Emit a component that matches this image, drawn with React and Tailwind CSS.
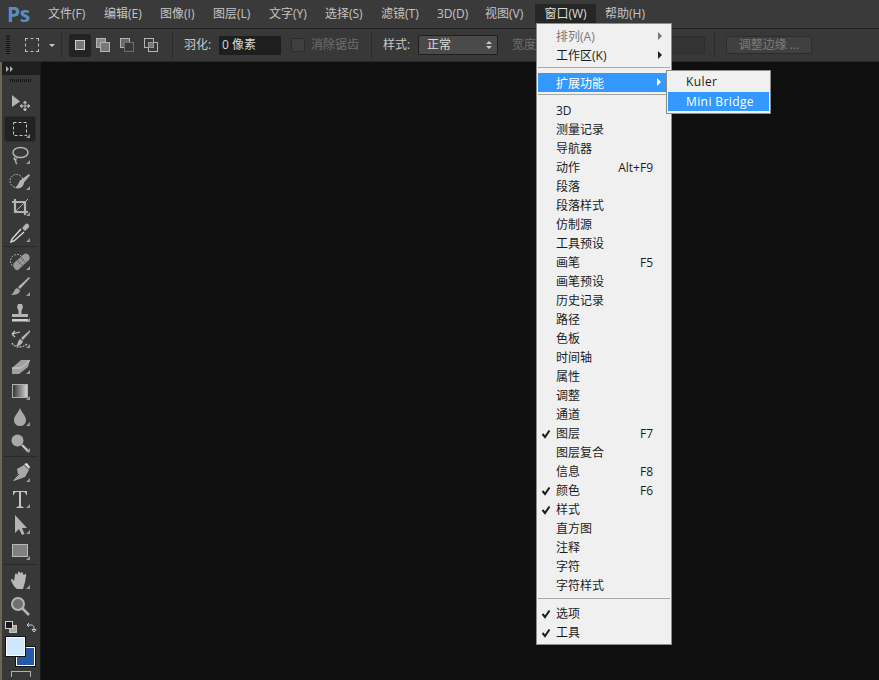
import React from 'react';

const cjk = { fontFamily: '"Open Sans", "Noto Sans CJK SC", sans-serif' };

const menus = [
  ['文件(F)', 'w-[39px]'],
  ['编辑(E)', 'w-[39px]'],
  ['图像(I)', 'w-[36px]'],
  ['图层(L)', 'w-[39px]'],
  ['文字(Y)', 'w-[39px]'],
  ['选择(S)', 'w-[39px]'],
  ['滤镜(T)', 'w-[39px]'],
  ['3D(D)', 'w-[31px]'],
  ['视图(V)', 'w-[39px]'],
];

const windowItems = [
  { label: '3D' },
  { label: '测量记录' },
  { label: '导航器' },
  { label: '动作', key: 'Alt+F9' },
  { label: '段落' },
  { label: '段落样式' },
  { label: '仿制源' },
  { label: '工具预设' },
  { label: '画笔', key: 'F5' },
  { label: '画笔预设' },
  { label: '历史记录' },
  { label: '路径' },
  { label: '色板' },
  { label: '时间轴' },
  { label: '属性' },
  { label: '调整' },
  { label: '通道' },
  { label: '图层', key: 'F7', checked: true },
  { label: '图层复合' },
  { label: '信息', key: 'F8' },
  { label: '颜色', key: 'F6', checked: true },
  { label: '样式', checked: true },
  { label: '直方图' },
  { label: '注释' },
  { label: '字符' },
  { label: '字符样式' },
];

const Check = () => (
  <svg width="10" height="10" viewBox="0 0 10 10" className="absolute left-[4px] top-[5px]">
    <path d="M1.5 5 L4 8 L8.5 1.5" fill="none" stroke="#1c1c1c" strokeWidth="2" />
  </svg>
);

const Arrow = ({ color = '#222' }) => (
  <svg width="4" height="8" viewBox="0 0 4 8" className="absolute right-[9px] top-[5px]">
    <path d="M0 0 L4 4 L0 8 Z" fill={color} />
  </svg>
);

const MenuRow = ({ label, shortcut, checked, arrow, disabled, active }) => (
  <div
    className={`relative flex h-[19px] items-center justify-between pr-[18px] text-[12px] leading-[19px] ${active ? 'bg-[#3399ff] pl-[18px] pt-[1px] text-white' : disabled ? 'pl-[19px] text-[#777777]' : 'pl-[19px] text-[#1c1c1c]'}`}
  >
    {checked && <Check />}
    <span>{label}</span>
    {shortcut && <span>{shortcut}</span>}
    {arrow && <Arrow color={active ? '#ffffff' : disabled ? '#777777' : '#222222'} />}
  </div>
);

const Sep = ({ cls }) => <div className={`mx-[1px] h-px bg-[#a8a8a8] ${cls}`} />;

const Divider = ({ cls }) => <div className={`h-[26px] w-px bg-[#2a2a2a] ${cls}`} />;

const ModeIcon = ({ children, cls }) => (
  <svg width="16" height="16" viewBox="0 0 16 16" className={cls}>
    {children}
  </svg>
);

const Corner = () => (
  <svg width="4" height="4" viewBox="0 0 4 4" className="absolute bottom-[3px] right-[5px]">
    <path d="M4 0 V4 H0 Z" fill="#9a9a9a" />
  </svg>
);

const Tool = ({ children, corner = true, selected, cls = '' }) => (
  <div
    className={`relative mx-[3px] flex h-[24px] w-[30px] shrink-0 items-center justify-center ${selected ? 'rounded-[2px] bg-[#222222] shadow-[0_0_0_1px_#2e2e2e]' : ''} ${cls}`}
  >
    <svg width="22" height="22" viewBox="0 0 22 22">
      {children}
    </svg>
    {corner && <Corner />}
  </div>
);

const ToolSep = () => <div className="mx-[2px] mt-[-1px] h-px shrink-0 bg-[#2a2a2a]" />;

const G = '#b4b4b4';

export default function App() {
  return (
    <div className="relative h-[680px] w-[879px] overflow-hidden bg-[#0f0f0f]" style={cjk}>
      {/* menu bar */}
      <div className="flex h-[29px] items-center border-b border-[#222222] bg-[#3a3a3a] pl-[7px] text-[12px] text-[#c4c4c4]">
        <span className="w-[41px] text-[21px] font-bold leading-none tracking-[-0.5px] text-[#5b8cbf]">Ps</span>
        <div className="flex items-center gap-[17px]">
          {menus.map(([label, w]) => (
            <span key={label} className={`${w} whitespace-nowrap`}>
              {label}
            </span>
          ))}
        </div>
        <span className="ml-[11px] flex h-[20px] w-[61px] items-center justify-center bg-[#262626] text-[#dddddd]">窗口(W)</span>
        <span className="ml-[9px] whitespace-nowrap">帮助(H)</span>
      </div>

      {/* options bar */}
      <div className="flex h-[33px] items-center border-b border-[#2a2a2a] bg-[#383838] text-[12px] text-[#c8c8c8]">
        <div className="ml-[6px] h-[20px] w-[4px] bg-[repeating-linear-gradient(to_bottom,#161616_0,#161616_1px,transparent_1px,transparent_2px)]" />
        <div className="ml-[15px] h-[14px] w-[14px] border border-dashed border-[#bdbdbd]" />
        <div className="ml-[10px] h-0 w-0 border-x-[3px] border-t-[3px] border-x-transparent border-t-[#c8c8c8]" />
        <Divider cls="ml-[6px]" />
        <div className="ml-[7px] flex h-[23px] w-[22px] items-center justify-center rounded-[2px] bg-[#232323]">
          <div className="h-[10px] w-[10px] border border-[#cccccc] bg-[#777777]" />
        </div>
        <ModeIcon cls="ml-[4px]">
          <rect x="1.5" y="1.5" width="9" height="9" fill="#8a8a8a" stroke="#b4b4b4" />
          <rect x="5.5" y="5.5" width="9" height="9" fill="#777777" stroke="#b4b4b4" />
        </ModeIcon>
        <ModeIcon cls="ml-[8px]">
          <rect x="1.5" y="1.5" width="9" height="9" fill="#6a6a6a" stroke="#b4b4b4" />
          <rect x="5.5" y="5.5" width="9" height="9" fill="#383838" stroke="#6e6e6e" />
        </ModeIcon>
        <ModeIcon cls="ml-[8px]">
          <rect x="1.5" y="1.5" width="9" height="9" fill="none" stroke="#b4b4b4" />
          <rect x="5.5" y="5.5" width="9" height="9" fill="none" stroke="#b4b4b4" />
          <rect x="5.5" y="5.5" width="5" height="5" fill="#777777" />
        </ModeIcon>
        <Divider cls="ml-[13px]" />
        <span className="ml-[11px] w-[27px] whitespace-nowrap">羽化:</span>
        <div className="ml-[8px] flex h-[19px] w-[62px] items-center bg-[#1e1e1e] pl-[3px] text-[#d8d8d8]">0 像素</div>
        <div className="ml-[10px] h-[14px] w-[14px] rounded-[2px] border border-[#2c2c2c] bg-[#3f3f3f]" />
        <span className="ml-[6px] w-[46px] whitespace-nowrap text-[#6f6f6f]">消除锯齿</span>
        <Divider cls="ml-[14px]" />
        <span className="ml-[11px] w-[28px] whitespace-nowrap">样式:</span>
        <div className="ml-[7px] flex h-[20px] w-[80px] items-center justify-between rounded-[2px] border border-[#1e1e1e] bg-[#4a4a4a] pl-[8px] pr-[5px] text-[#dddddd]">
          <span>正常</span>
          <span className="flex flex-col gap-[2px]">
            <span className="h-0 w-0 border-x-[3px] border-b-[3px] border-x-transparent border-b-[#c8c8c8]" />
            <span className="h-0 w-0 border-x-[3px] border-t-[3px] border-x-transparent border-t-[#c8c8c8]" />
          </span>
        </div>
        <span className="ml-[14px] w-[24px] whitespace-nowrap text-[#6f6f6f]">宽度</span>
        <div className="ml-[36px] h-[18px] w-[133px] rounded-[1px] bg-[#333333] shadow-[inset_0_0_0_1px_#2e2e2e]" />
        <Divider cls="ml-[9px]" />
        <div className="ml-[11px] flex h-[18px] w-[86px] items-center justify-center rounded-[2px] border border-[#2c2c2c] bg-[#404040] text-[#7c7c7c]">调整边缘 ...</div>
      </div>

      <div className="flex h-[618px]">
        {/* toolbar */}
        <div className="flex w-[41px] shrink-0 flex-col border-r border-[#1c1c1c] border-l-2 border-l-[#6e6555] bg-[#383838]">
          <div className="flex h-[13px] shrink-0 items-center gap-px bg-[#1e1e1e] pl-[4px]">
            <span className="h-0 w-0 border-y-[3px] border-l-[3px] border-y-transparent border-l-[#b0b0b0]" />
            <span className="h-0 w-0 border-y-[3px] border-l-[3px] border-y-transparent border-l-[#b0b0b0]" />
          </div>
          <div className="mx-[8px] mb-[9px] mt-[4px] h-[3px] shrink-0 bg-[repeating-linear-gradient(to_right,#151515_0,#151515_1px,transparent_1px,transparent_2px)]" />

          <div className="flex flex-col gap-[2px]">
            <Tool corner={false}>
              <path d="M3 3 L3 15 L11 9.5 Z" fill={G} />
              <path d="M16 9 V19 M11 14 H21 M16 9 l-1.5 2 h3 Z M16 19 l-1.5 -2 h3 Z M11 14 l2 -1.5 v3 Z M21 14 l-2 -1.5 v3 Z" stroke={G} fill={G} strokeWidth="1" />
            </Tool>
            <Tool selected>
              <rect x="4.5" y="4.5" width="13" height="13" fill="none" stroke="#c8c8c8" strokeDasharray="3 2" />
            </Tool>
            <Tool>
              <ellipse cx="11.5" cy="8.5" rx="7.5" ry="5" fill="none" stroke={G} strokeWidth="1.5" />
              <path d="M6 13 C4 15 6 17 7 15 C8 13 5 18 8 20" fill="none" stroke={G} strokeWidth="1.3" />
            </Tool>
            <Tool>
              <circle cx="7.5" cy="11" r="6.5" fill="none" stroke="#d0d0d0" strokeDasharray="1.5 1.5" />
              <path d="M20 4 L11 10.5 C9.5 13 8.5 16 6 18 C11 19.5 14.5 17 15 12.5 L21 5.5 Z" fill={G} />
            </Tool>
            <Tool>
              <path d="M6 3 V16 H19 M3 6 H16 V19" fill="none" stroke={G} strokeWidth="2.2" />
              <path d="M7 15 L19 3" stroke={G} strokeWidth="1" />
            </Tool>
            <Tool>
              <path d="M19 2 C21 4 20 6 18 7 L16 9 L13 6 L15 4 C16 2 18 1 19 2 Z" fill={G} />
              <path d="M12 7 L3 17 L2 20 L5 19 L15 10" fill="none" stroke="#dddddd" strokeWidth="1.4" />
            </Tool>
            <ToolSep />
            <Tool>
              <circle cx="8" cy="11" r="6.5" fill="none" stroke="#cccccc" strokeDasharray="1.5 1.5" />
              <path d="M9 20 L20 10 C22 7 19 2 15 4 L5 13 C3 16 6 21 9 20 Z" fill="#9a9a9a" />
              <path d="M9 11 l4 4 M12 8 l4 4" stroke="#5a5a5a" strokeWidth="2" strokeDasharray="1 1.5" />
            </Tool>
            <Tool>
              <path d="M20 1 L21 2 L11 13 L9 11 Z" fill={G} />
              <path d="M8 12 L11 14 C11 18 7 19 2 19 C5 17 5 13 8 12 Z" fill="#a4a4a4" />
            </Tool>
            <Tool>
              <path d="M9 2 H13 L14 5 L12.5 9 V12 H19 V15 H3 V12 H9.5 V9 L8 5 Z" fill={G} />
              <rect x="3" y="17" width="16" height="2.5" fill="#d0d0d0" />
            </Tool>
            <Tool>
              <path d="M21 2 L12 10 L14 12 L21 4 Z M11 11 L14 13 C13 17 10 18 7 18 C9 16 9 12 11 11 Z" fill={G} />
              <path d="M3 6 L11 4 M3 6 L6 3 M3 6 L6 9" fill="none" stroke="#c8c8c8" strokeWidth="1.2" />
              <path d="M3 15 C5 19 12 21 18 16" fill="none" stroke="#c8c8c8" strokeWidth="1.2" strokeDasharray="2 1" />
            </Tool>
            <Tool>
              <path d="M3 14 L12 6 H21 L19 13 L10 20 H3 Z" fill="#a0a0a0" />
              <path d="M3 14 H12 L21 6" fill="none" stroke="#d0d0d0" strokeWidth="1" />
            </Tool>
            <Tool>
              <defs>
                <linearGradient id="grad" x1="0" x2="1" y1="0" y2="0">
                  <stop offset="0" stopColor="#333333" />
                  <stop offset="1" stopColor="#d8d8d8" />
                </linearGradient>
              </defs>
              <rect x="3.5" y="4.5" width="15" height="13" fill="url(#grad)" stroke="#b0b0b0" />
            </Tool>
            <Tool>
              <path d="M11 2 C13 7 17 10 17 14 C17 18 14 20 11 20 C8 20 5 18 5 14 C5 10 9 7 11 2 Z" fill="#a8a8a8" />
            </Tool>
            <Tool>
              <circle cx="8.5" cy="8.5" r="6" fill="#a8a8a8" />
              <path d="M13 13 L20 20" stroke="#c4c4c4" strokeWidth="2.4" />
            </Tool>
            <ToolSep />
            <Tool cls="mt-[2px]">
              <path d="M15 3 L20 8 L16 15 L5 19 L4 18 L9 12 L8 7 Z" fill="#a8a8a8" />
              <path d="M15 2 L20 7 L21 5 L18 1 Z" fill="#dddddd" />
              <path d="M4 18 L10 12" stroke="#383838" strokeWidth="1" />
            </Tool>
            <Tool>
              <path d="M4 3 H18 V7 H17 C17 5 16 4 14 4 H12 V17 C12 18.5 12.5 18.8 14.5 19 V20 H7.5 V19 C9.5 18.8 10 18.5 10 17 V4 H8 C6 4 5 5 5 7 H4 Z" fill="#c4c4c4" />
            </Tool>
            <Tool>
              <path d="M6 1 L6 19 L10 15 L13 21 L15.5 20 L13 14 L18 14 Z" fill={G} />
            </Tool>
            <Tool>
              <rect x="3.5" y="4.5" width="15" height="12" fill="#808080" stroke="#b8b8b8" />
            </Tool>
            <ToolSep />
            <Tool cls="mt-[1px]">
              <path d="M8 20 C5 18 3 14 2 11 C2 9 4 10 5 12 L6 6 C6 4 8 4 8 6 L9 4 C9 2 11 2 11 4 L12 4 C12 2 14 3 14 5 L15 6 C16 4 18 5 17 7 L16 13 L14 20 Z" fill="#b8b8b8" />
            </Tool>
            <Tool corner={false}>
              <circle cx="9" cy="9" r="6" fill="#707070" stroke={G} strokeWidth="2" />
              <path d="M13 13 L20 20" stroke={G} strokeWidth="2.6" />
            </Tool>
          </div>

          {/* colour swatches */}
          <div className="ml-[3px] mt-[3px] flex items-center gap-[9px]">
            <svg width="12" height="12" viewBox="0 0 12 12">
              <rect x="4.5" y="4.5" width="7" height="7" fill="#aaaaaa" stroke="#c4c4c4" />
              <rect x="0.5" y="0.5" width="7" height="7" fill="#1a1a1a" stroke="#d0d0d0" />
            </svg>
            <svg width="11" height="11" viewBox="0 0 11 11">
              <path d="M1 3 H5 C8 3 8 5 8 8 M1 3 L3 1 M1 3 L3 5 M8 10 L6 7.5 H10 Z" fill="none" stroke="#cccccc" strokeWidth="1" />
            </svg>
          </div>
          <div className="relative ml-[3px] mt-[4px] h-[29px] w-[30px]">
            <div className="absolute left-[11px] top-[10px] h-[19px] w-[19px] border border-white bg-[#2559a7] shadow-[0_0_0_1px_#111111]" />
            <div className="absolute left-[1px] top-0 h-[19px] w-[19px] border border-white bg-[#cfe6fb] shadow-[0_0_0_1px_#111111]" />
          </div>
          <div className="mx-[9px] mt-[5px] h-[6px] border border-b-0 border-[#b0b0b0]" />
        </div>

        <div className="flex-1 bg-[#0f0f0f]" />
      </div>

      {/* window menu */}
      <div className="absolute left-[536px] top-[23px] h-[622px] w-[136px] border border-[#8d8d8d] bg-[#f0f0f0] pt-[3px]">
        <MenuRow label="排列(A)" arrow disabled />
        <MenuRow label="工作区(K)" arrow />
        <Sep cls="mt-[2px]" />
        <div className="mx-[1px] mt-[5px]">
          <MenuRow label="扩展功能" arrow active />
        </div>
        <Sep cls="mt-[2px]" />
        <div className="pt-[6px]">
          {windowItems.map((item) => (
            <MenuRow key={item.label} label={item.label} shortcut={item.key} checked={item.checked} />
          ))}
        </div>
        <Sep cls="mt-[3px]" />
        <div className="pt-[5px]">
          <MenuRow label="选项" checked />
          <MenuRow label="工具" checked />
        </div>
      </div>

      {/* extensions submenu */}
      <div className="absolute left-[666px] top-[70px] h-[44px] w-[105px] border border-[#8d8d8d] bg-[#f0f0f0] p-[1px]">
        <div className="flex h-[20px] items-center pl-[18px] text-[12px] tracking-[0.4px] text-[#1c1c1c]">Kuler</div>
        <div className="flex h-[19px] items-center bg-[#3399ff] pl-[18px] text-[12px] tracking-[0.4px] text-white">Mini Bridge</div>
      </div>
    </div>
  );
}
